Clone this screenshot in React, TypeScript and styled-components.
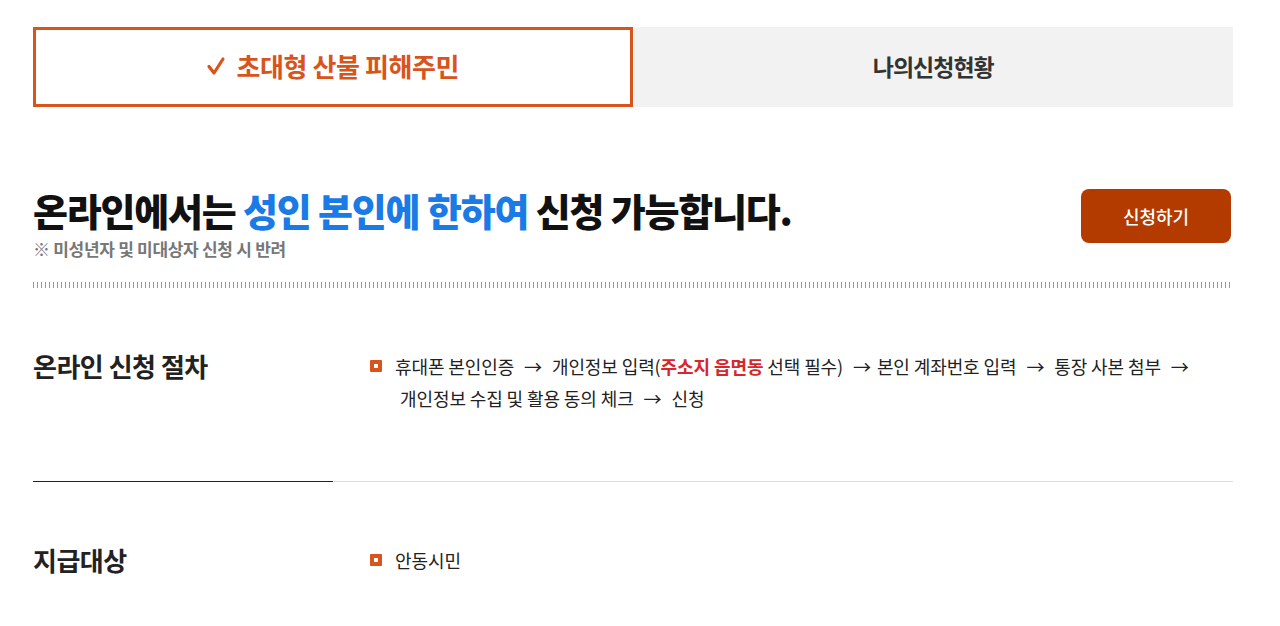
import React from 'react';
import styled, { createGlobalStyle } from 'styled-components';

const GlobalStyle = createGlobalStyle`
  html, body {
    margin: 0;
    padding: 0;
    background: #ffffff;
  }
  body {
    font-family: "Noto Sans CJK KR", "Noto Sans", sans-serif;
    color: #222;
  }
`;

const Page = styled.div`
  width: 1200px;
  margin-left: 33px;
  padding-top: 27px;
`;

const Tabs = styled.div`
  display: grid;
  grid-template-columns: 1fr 1fr;
  gap: 1px;
`;

const Tab = styled.div<{ $active?: boolean }>`
  height: 80px;
  box-sizing: border-box;
  display: flex;
  align-items: center;
  justify-content: center;
  gap: 10px;
  padding-bottom: 3px;
  font-size: ${p => (p.$active ? '26px' : '23px')};
  font-weight: 700;
  letter-spacing: ${p => (p.$active ? '-0.4px' : '-1px')};
  color: ${p => (p.$active ? '#d9541a' : '#333')};
  background: ${p => (p.$active ? '#fff' : '#f2f2f2')};
  border: ${p => (p.$active ? '3px solid #d9541a' : 'none')};
`;

const Intro = styled.div`
  display: flex;
  justify-content: space-between;
  align-items: flex-start;
  margin-top: 80px;
  padding-bottom: 21px;
  border-bottom: 6px solid transparent;
  border-image: repeating-linear-gradient(90deg, #999 0 1px, transparent 1px 4px) 0 0 6 0;
`;

const Headline = styled.h2`
  margin: 0;
  font-size: 38px;
  font-weight: 900;
  letter-spacing: -1.2px;
  line-height: 46px;
  color: #111;
`;

const Blue = styled.span`
  color: #1a7ae6;
`;

const Notice = styled.p`
  margin: 4px 0 0;
  font-size: 17px;
  font-weight: 700;
  color: #777;
  letter-spacing: -0.3px;
  line-height: 24px;
`;

const ApplyButton = styled.button`
  width: 150px;
  height: 54px;
  margin-top: 2px;
  margin-right: 2px;
  border: none;
  border-radius: 8px;
  background: #b33b00;
  color: #fff;
  font-family: inherit;
  font-size: 18px;
  font-weight: 500;
  cursor: pointer;
`;

const Section = styled.section<{ $bottom?: number }>`
  display: grid;
  grid-template-columns: 337px 1fr;
  padding: 62px 0 ${p => p.$bottom ?? 58}px;
`;

const SectionDivider = styled.div`
  display: grid;
  grid-template-columns: 300px 1fr;
  & > span:first-child { height: 1px; background: #222; }
  & > span:last-child { height: 1px; background: #ddd; }
`;

const SectionTitle = styled.h3`
  margin: 0;
  font-size: 26px;
  font-weight: 700;
  letter-spacing: -0.5px;
  line-height: 32px;
  color: #222;
`;

const List = styled.ul`
  margin: 0;
  padding: 0;
  list-style: none;
`;

const Item = styled.li`
  position: relative;
  padding-left: 25px;
  font-size: 18px;
  line-height: 32px;
  color: #222;
  letter-spacing: -0.1px;
  &::before {
    content: '';
    position: absolute;
    left: 0;
    top: 10px;
    width: 4px;
    height: 4px;
    border: 4px solid #d9541a;
    border-radius: 1px;
    background: #fff;
  }
`;

const Indent = styled.span`
  padding-left: 5px;
`;

const Red = styled.strong`
  color: #d8262c;
  font-weight: 700;
`;

const Arrow = styled.span`
  margin: 0 6px;
`;

function Check() {
  return (
    <svg width="20" height="20" viewBox="0 0 20 20" fill="none">
      <path d="M3 10.5 L8 17 L17 3" stroke="#d9541a" strokeWidth="3.2" strokeLinecap="round" strokeLinejoin="round" />
    </svg>
  );
}

export default function App() {
  return (
    <>
      <GlobalStyle />
      <Page>
        <Tabs>
          <Tab $active>
            <Check />
            초대형 산불 피해주민
          </Tab>
          <Tab>나의신청현황</Tab>
        </Tabs>

        <Intro>
          <div>
            <Headline>
              온라인에서는 <Blue>성인 본인에 한하여</Blue> 신청 가능합니다.
            </Headline>
            <Notice>※ 미성년자 및 미대상자 신청 시 반려</Notice>
          </div>
          <ApplyButton>신청하기</ApplyButton>
        </Intro>

        <Section $bottom={67}>
          <SectionTitle>온라인 신청 절차</SectionTitle>
          <List>
            <Item>
              휴대폰 본인인증 <Arrow>→</Arrow> 개인정보 입력(<Red>주소지 읍면동</Red> 선택 필수) <Arrow>→</Arrow>
              본인 계좌번호 입력 <Arrow>→</Arrow> 통장 사본 첨부 <Arrow>→</Arrow>
              <br />
              <Indent>개인정보 수집 및 활용 동의 체크</Indent> <Arrow>→</Arrow> 신청
            </Item>
          </List>
        </Section>

        <SectionDivider>
          <span />
          <span />
        </SectionDivider>

        <Section>
          <SectionTitle>지급대상</SectionTitle>
          <List>
            <Item>안동시민</Item>
          </List>
        </Section>
      </Page>
    </>
  );
}
